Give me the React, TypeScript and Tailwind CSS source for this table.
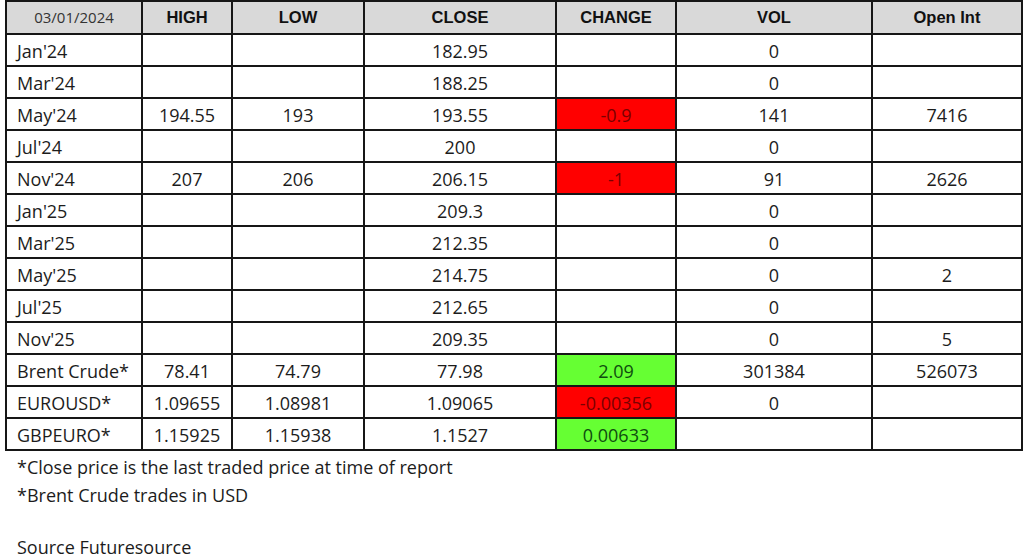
import React from "react";

type Row = {
  name: string;
  high?: string;
  low?: string;
  close: string;
  change?: string;
  tone?: "up" | "down";
  vol?: string;
  oi?: string;
};

const rows: Row[] = [
  { name: "Jan'24", close: "182.95", vol: "0" },
  { name: "Mar'24", close: "188.25", vol: "0" },
  { name: "May'24", high: "194.55", low: "193", close: "193.55", change: "-0.9", tone: "down", vol: "141", oi: "7416" },
  { name: "Jul'24", close: "200", vol: "0" },
  { name: "Nov'24", high: "207", low: "206", close: "206.15", change: "-1", tone: "down", vol: "91", oi: "2626" },
  { name: "Jan'25", close: "209.3", vol: "0" },
  { name: "Mar'25", close: "212.35", vol: "0" },
  { name: "May'25", close: "214.75", vol: "0", oi: "2" },
  { name: "Jul'25", close: "212.65", vol: "0" },
  { name: "Nov'25", close: "209.35", vol: "0", oi: "5" },
  { name: "Brent Crude*", high: "78.41", low: "74.79", close: "77.98", change: "2.09", tone: "up", vol: "301384", oi: "526073" },
  { name: "EUROUSD*", high: "1.09655", low: "1.08981", close: "1.09065", change: "-0.00356", tone: "down", vol: "0" },
  { name: "GBPEURO*", high: "1.15925", low: "1.15938", close: "1.1527", change: "0.00633", tone: "up" },
];

const cell = "border-2 border-[#161616] px-2 pt-[2px] leading-none";
const head = "border-2 border-[#161616] bg-[#d9d9d9] text-[16.5px] font-bold text-[#111] font-['Liberation_Sans',Arial,sans-serif]";

export default function App() {
  return (
    <div className="w-[1024px] h-[555px] overflow-hidden bg-white font-['Open_Sans','Lato',sans-serif] text-[18px] text-[#1c1c1c]">
      <table className="ml-[5px] table-fixed border-collapse w-[1016px]">
        <colgroup>
          <col className="w-[136px]" />
          <col className="w-[90px]" />
          <col className="w-[132px]" />
          <col className="w-[192px]" />
          <col className="w-[120px]" />
          <col className="w-[196px]" />
          <col className="w-[150px]" />
        </colgroup>
        <thead>
          <tr className="h-[33px]">
            <th className="border-2 border-[#161616] bg-[#d9d9d9] text-[15px] font-normal text-[#333] font-['Open_Sans',sans-serif]">03/01/2024</th>
            <th className={head}>HIGH</th>
            <th className={head}>LOW</th>
            <th className={head}>CLOSE</th>
            <th className={head}>CHANGE</th>
            <th className={head}>VOL</th>
            <th className={head}>Open Int</th>
          </tr>
        </thead>
        <tbody>
          {rows.map((r) => (
            <tr key={r.name} className="h-[32px]">
              <td className={`${cell} text-left pl-[10px]`}>{r.name}</td>
              <td className={`${cell} text-center`}>{r.high}</td>
              <td className={`${cell} text-center`}>{r.low}</td>
              <td className={`${cell} text-center`}>{r.close}</td>
              <td
                className={`${cell} text-center ${
                  r.tone === "down"
                    ? "bg-[#ff0000] text-[#7a0000]"
                    : r.tone === "up"
                    ? "bg-[#66ff33] text-[#0f4d0f]"
                    : ""
                }`}
              >
                {r.change}
              </td>
              <td className={`${cell} text-center`}>{r.vol}</td>
              <td className={`${cell} text-center`}>{r.oi}</td>
            </tr>
          ))}
        </tbody>
      </table>
      <div className="pl-[17px] pt-[2px] leading-[28px]">
        <p>*Close price is the last traded price at time of report</p>
        <p>*Brent Crude trades in USD</p>
        <p className="mt-[24px]">Source Futuresource</p>
      </div>
    </div>
  );
}
